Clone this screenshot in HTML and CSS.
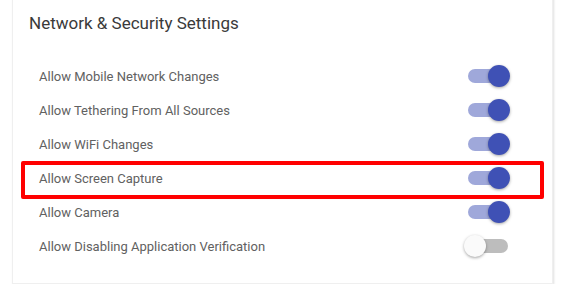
FILE: index.html
```html
<!DOCTYPE html>
<html lang="en">
<head>
    <meta charset="UTF-8">
    <meta name="viewport" content="width=device-width, initial-scale=1.0">
    <title>Network &amp; Security Settings</title>
    <link rel="stylesheet" href="styles.css">
</head>
<body>
<div class="page">
    <div class="card">
        <h2 class="card-title">Network &amp; Security Settings</h2>
        <ul class="settings-list">
            <li class="setting-row">
                <span class="setting-label">Allow Mobile Network Changes</span>
                <span class="switch on"><span class="track"></span><span class="knob"></span></span>
            </li>
            <li class="setting-row">
                <span class="setting-label">Allow Tethering From All Sources</span>
                <span class="switch on"><span class="track"></span><span class="knob"></span></span>
            </li>
            <li class="setting-row">
                <span class="setting-label">Allow WiFi Changes</span>
                <span class="switch on"><span class="track"></span><span class="knob"></span></span>
            </li>
            <li class="setting-row highlighted">
                <span class="setting-label">Allow Screen Capture</span>
                <span class="switch on"><span class="track"></span><span class="knob"></span></span>
            </li>
            <li class="setting-row">
                <span class="setting-label">Allow Camera</span>
                <span class="switch on"><span class="track"></span><span class="knob"></span></span>
            </li>
            <li class="setting-row">
                <span class="setting-label">Allow Disabling Application Verification</span>
                <span class="switch"><span class="track"></span><span class="knob"></span></span>
            </li>
        </ul>
    </div>
</div>
</body>
</html>
```

FILE: styles.css
```css
/* General styles */
body {
    font-family: 'Roboto', sans-serif;
    background-color: #fff;
    margin: 0;
    padding: 0;
}

.page {
    padding: 0 25px 0 12px;
}

/* Card */
.card {
    margin-top: -4px;
    padding: 14px 42px 20px 16px;
    background-color: #fff;
    border: 1px solid #efefef;
    box-shadow: 1px 1px 2px rgba(0, 0, 0, 0.12);
}

.card-title {
    margin: 0 0 24px 0;
    font-size: 17px;
    font-weight: 400;
    line-height: 24px;
    color: #3a3a3a;
}

.settings-list {
    list-style: none;
    margin: 0;
    padding: 0;
}

.setting-row {
    position: relative;
    display: flex;
    align-items: center;
    justify-content: space-between;
    height: 34px;
    padding-left: 10px;
}

.setting-label {
    font-size: 13px;
    color: #616161;
}

/* Annotation box round the highlighted row */
.setting-row.highlighted::after {
    content: "";
    position: absolute;
    top: 0;
    bottom: -4px;
    left: -8px;
    right: -34px;
    border: 4px solid #ff0000;
    border-radius: 2px;
}

/* Toggle switch */
.switch {
    position: relative;
    width: 46px;
    height: 22px;
}

.switch .track {
    position: absolute;
    left: 4px;
    top: 4px;
    width: 40px;
    height: 14px;
    border-radius: 7px;
    background-color: #bdbdbd;
}

.switch .knob {
    position: absolute;
    left: 0;
    top: 0;
    width: 22px;
    height: 22px;
    border-radius: 50%;
    background-color: #fafafa;
    box-shadow: 0 1px 3px rgba(0, 0, 0, 0.35);
}

.switch.on .track {
    background-color: #9fa8da;
}

.switch.on .knob {
    left: 24px;
    background-color: #3f51b5;
}
```
